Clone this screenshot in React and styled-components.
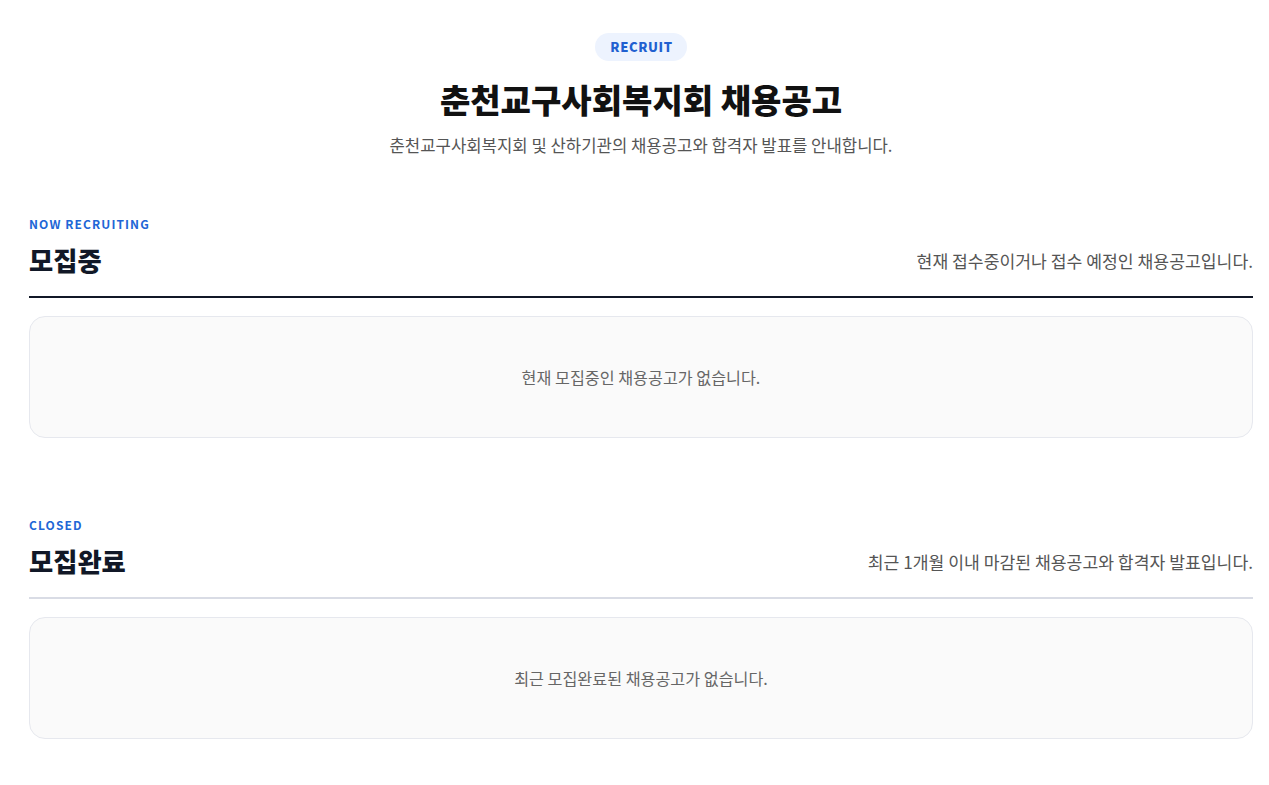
import styled, { createGlobalStyle } from "styled-components";

const GlobalStyle = createGlobalStyle`
  body {
    margin: 0;
    background: #ffffff;
    font-family: "Noto Sans CJK KR", "Noto Sans", sans-serif;
    color: #111;
  }
`;

const sections = [
  {
    eyebrow: "NOW RECRUITING",
    title: "모집중",
    desc: "현재 접수중이거나 접수 예정인 채용공고입니다.",
    empty: "현재 모집중인 채용공고가 없습니다.",
    strong: true,
  },
  {
    eyebrow: "CLOSED",
    title: "모집완료",
    desc: "최근 1개월 이내 마감된 채용공고와 합격자 발표입니다.",
    empty: "최근 모집완료된 채용공고가 없습니다.",
    strong: false,
  },
];

export default function App() {
  return (
    <>
      <GlobalStyle />
      <Page>
        <Hero>
          <Badge>RECRUIT</Badge>
          <Title>춘천교구사회복지회 채용공고</Title>
          <Lead>춘천교구사회복지회 및 산하기관의 채용공고와 합격자 발표를 안내합니다.</Lead>
        </Hero>
        {sections.map((s) => (
          <Section key={s.title}>
            <SectionHead $strong={s.strong}>
              <div>
                <Eyebrow>{s.eyebrow}</Eyebrow>
                <SectionTitle>{s.title}</SectionTitle>
              </div>
              <SectionDesc>{s.desc}</SectionDesc>
            </SectionHead>
            <EmptyCard>{s.empty}</EmptyCard>
          </Section>
        ))}
      </Page>
    </>
  );
}

const Page = styled.main`
  padding: 33px 16px 40px 29px;
`;

const Hero = styled.header`
  display: flex;
  flex-direction: column;
  align-items: center;
  text-align: center;
  margin-bottom: 59px;
`;

const Badge = styled.span`
  display: inline-block;
  height: 28px;
  line-height: 28px;
  padding: 0 14px 0 15px;
  border-radius: 14px;
  background: #edf3fe;
  color: #2160d0;
  font-size: 13px;
  font-weight: 800;
  letter-spacing: 0.6px;
`;

const Title = styled.h1`
  margin: 17px 0 0;
  font-size: 33px;
  line-height: 42px;
  font-weight: 900;
  color: #111;
`;

const Lead = styled.p`
  margin: 13px 0 0;
  font-size: 16.7px;
  line-height: 24px;
  color: #555;
`;

const Section = styled.section`
  & + & {
    margin-top: 79px;
  }
`;

const SectionHead = styled.div`
  display: flex;
  justify-content: space-between;
  align-items: flex-end;
  padding-bottom: 19px;
  border-bottom: 2px solid ${(p) => (p.$strong ? "#111827" : "#d9dce5")};
`;

const Eyebrow = styled.div`
  font-size: 12px;
  line-height: 16px;
  font-weight: 700;
  letter-spacing: 1.1px;
  color: #2166d6;
  margin-bottom: 11px;
`;

const SectionTitle = styled.h2`
  margin: 0;
  font-size: 26.3px;
  line-height: 34px;
  font-weight: 800;
  color: #111827;
`;

const SectionDesc = styled.p`
  margin: 0 0 4px;
  font-size: 17.2px;
  line-height: 24px;
  color: #555;
`;

const EmptyCard = styled.div`
  margin-top: 18px;
  height: 122px;
  display: flex;
  align-items: center;
  justify-content: center;
  background: #fafafa;
  border: 1px solid #e6e8ee;
  border-radius: 16px;
  box-sizing: border-box;
  font-size: 16.2px;
  color: #666;
`;
